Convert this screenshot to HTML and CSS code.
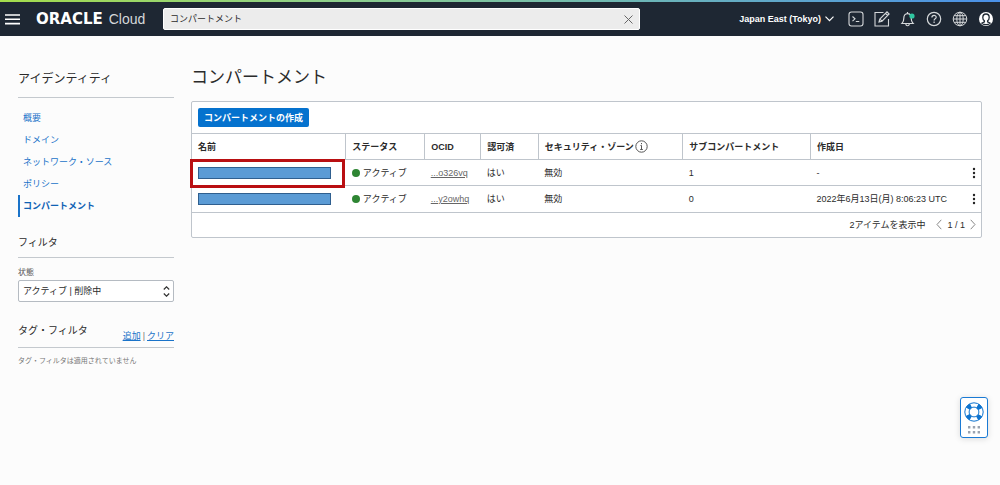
FILE: index.html
```html
<!DOCTYPE html>
<html lang="ja">
<head>
<meta charset="utf-8">
<title>コンパートメント</title>
<link rel="stylesheet" href="styles.css">
</head>
<body>
<header class="topbar">
  <button class="icon-btn menu" aria-label="メニュー"><svg width="15" height="11" viewBox="0 0 15 11" stroke="#fff" stroke-width="1.6"><path d="M0 1h15M0 5.3h15M0 9.600h15"/></svg></button>
  <a class="brand" href="#"><span class="brand-name">ORACLE</span><span class="brand-sub">Cloud</span></a>
  <div class="search">
    <input type="text" value="コンパートメント" aria-label="検索">
    <button class="icon-btn" aria-label="消去"><svg width="9" height="9" viewBox="0 0 9 9" stroke="#666" stroke-width="1"><path d="M.5.5l8 8M8.500.5l-8 8"/></svg></button>
  </div>
  <div class="tools">
    <button class="region">Japan East (Tokyo)<svg width="9" height="6" viewBox="0 0 9 6" fill="none" stroke="#fff" stroke-width="1.2"><path d="M.5.7l4 4 4-4"/></svg></button>
    <button class="icon-btn" aria-label="ターミナル"><svg width="16" height="16" viewBox="0 0 16 16" fill="none" stroke="#d5d8da" stroke-width="1.1"><rect x="1" y="1" width="14" height="14" rx="2.500"/><path d="M4.500 5.500l2.500 2.300-2.500 2.300M7.800 10.500h3.500"/></svg></button>
    <button class="icon-btn" aria-label="編集"><svg width="16" height="16" viewBox="0 0 16 16" fill="none" stroke="#d5d8da" stroke-width="1.1"><path d="M9.500 1.500H1v13.500h13.500V8"/><path d="M5 11l.8-3L13 .9l2.100 2.100L8 10.200zM11.500 2.400l2.100 2.100M5.800 8L8 10.200"/></svg></button>
    <button class="icon-btn" aria-label="お知らせ"><svg width="16" height="16" viewBox="0 0 16 16" fill="none" stroke="#d5d8da" stroke-width="1.200"><path d="M7.500 1v1.500M2 12.500c1.500-1.500 1.800-3 1.800-5.200 0-2.800 1.400-4.700 3.700-4.700s3.700 1.900 3.700 4.700c0 2.200.4 3.700 1.900 5.200zM5.800 13c.3 2.300 3.200 2.300 3.500 0"/><circle cx="12" cy="5" r="2.600" fill="#2fc6a0" stroke="none"/></svg></button>
    <button class="icon-btn" aria-label="ヘルプ"><svg width="16" height="16" viewBox="0 0 16 16" fill="none" stroke="#d5d8da" stroke-width="1.200"><circle cx="8" cy="8" r="6.700"/><path d="M5.900 6.500c0-2.700 4.300-2.700 4.300-.2 0 1.600-2.100 1.500-2.100 3.200M8.100 10.500v1.500"/></svg></button>
    <button class="icon-btn" aria-label="言語"><svg width="16" height="16" viewBox="0 0 16 16" fill="none" stroke="#d5d8da" stroke-width="1"><circle cx="8" cy="8" r="6.800"/><ellipse cx="8" cy="8" rx="3.200" ry="6.800"/><path d="M8 1.200v13.600M1.200 8h13.600M2.200 4.700h11.600M2.200 11.300h11.600"/></svg></button>
    <button class="icon-btn" aria-label="プロファイル"><svg width="16" height="16" viewBox="0 0 16 16"><circle cx="8" cy="8" r="7" fill="#fff"/><path d="M8 3c-2 0-3.200 1.500-3.200 3.400 0 1.500.7 2.800 1.600 3.400v1L4 12.200A6 6 0 0 0 8 13.600a6 6 0 0 0 4-1.400l-2.400-1.400v-1c.9-.6 1.600-1.900 1.600-3.400C11.200 4.500 10 3 8 3z" fill="none" stroke="#1f2933" stroke-width="1.300"/></svg></button>
  </div>
</header>
<div class="page">
  <aside class="sidebar">
    <h2 class="side-title">アイデンティティ</h2>
    <nav class="side-nav">
      <a href="#">概要</a>
      <a href="#">ドメイン</a>
      <a href="#">ネットワーク・ソース</a>
      <a href="#">ポリシー</a>
      <a href="#" class="active" aria-current="page">コンパートメント</a>
    </nav>
    <h3 class="filter-title">フィルタ</h3>
    <label class="field-label" for="state">状態</label>
    <div class="select-box">
      <select id="state"><option>アクティブ | 削除中</option></select>
      <svg width="7" height="11" viewBox="0 0 7 11" fill="none" stroke="#333" stroke-width="1.200"><path d="M.8 3.500l2.700-2.700 2.700 2.700M.8 7.500l2.700 2.700 2.700-2.700"/></svg>
    </div>
    <div class="tag-head">
      <h3>タグ・フィルタ</h3>
      <div class="tag-links"><a href="#">追加</a><span>|</span><a href="#">クリア</a></div>
    </div>
    <p class="note">タグ・フィルタは適用されていません</p>
  </aside>
  <main class="content">
    <h1>コンパートメント</h1>
    <section class="panel">
      <div class="actions"><button class="primary">コンパートメントの作成</button></div>
      <table>
        <colgroup><col class="c-name"><col class="c-status"><col class="c-ocid"><col class="c-auth"><col class="c-zone"><col class="c-sub"><col class="c-date"></colgroup>
        <thead>
          <tr><th>名前</th><th>ステータス</th><th>OCID</th><th>認可済</th><th><span class="with-icon">セキュリティ・ゾーン<svg width="13" height="13" viewBox="0 0 13 13" fill="none" stroke="#555" stroke-width="1"><circle cx="6.500" cy="6.500" r="5.700"/><path d="M6.500 3v1.200M5.500 5.500h1v4M5.200 9.500h2.600"/></svg></span></th><th>サブコンパートメント</th><th>作成日</th></tr>
        </thead>
        <tbody>
          <tr>
            <td class="marked"><span class="mask"></span></td>
            <td><span class="status"><i></i>アクティブ</span></td>
            <td><a class="ocid" href="#">...o326vq</a></td>
            <td>はい</td><td>無効</td><td>1</td>
            <td><div class="date"><span>-</span><button class="icon-btn" aria-label="アクション"><svg width="4" height="12" viewBox="0 0 4 12" fill="#222"><circle cx="2" cy="2" r="1.200"/><circle cx="2" cy="6" r="1.200"/><circle cx="2" cy="10" r="1.200"/></svg></button></div></td>
          </tr>
          <tr>
            <td><span class="mask"></span></td>
            <td><span class="status"><i></i>アクティブ</span></td>
            <td><a class="ocid" href="#">...y2owhq</a></td>
            <td>はい</td><td>無効</td><td>0</td>
            <td><div class="date"><span>2022年6月13日(月) 8:06:23 UTC</span><button class="icon-btn" aria-label="アクション"><svg width="4" height="12" viewBox="0 0 4 12" fill="#222"><circle cx="2" cy="2" r="1.200"/><circle cx="2" cy="6" r="1.200"/><circle cx="2" cy="10" r="1.200"/></svg></button></div></td>
          </tr>
        </tbody>
      </table>
      <div class="pager">
        <span class="count">2アイテムを表示中</span>
        <button class="icon-btn" aria-label="前へ"><svg width="6" height="11" viewBox="0 0 6 11" fill="none" stroke="#888"><path d="M5.300.8L1 5.500l4.300 4.700"/></svg></button>
        <span>1 / 1</span>
        <button class="icon-btn" aria-label="次へ"><svg width="6" height="11" viewBox="0 0 6 11" fill="none" stroke="#888"><path d="M.7.8L5 5.500.7 10.200"/></svg></button>
      </div>
    </section>
  </main>
</div>
<button class="help" aria-label="サポート">
  <svg width="20" height="20" viewBox="0 0 20 20" fill="none"><circle cx="10" cy="10" r="7" stroke="#fff" stroke-width="5"/><circle cx="10" cy="10" r="7" stroke="#0f74cf" stroke-width="4.600" stroke-dasharray="4.400 6.596" stroke-dashoffset="-3.300"/><circle cx="10" cy="10" r="9.200" stroke="#0f74cf"/><circle cx="10" cy="10" r="4.900" stroke="#0f74cf"/></svg>
  <svg width="14" height="8" viewBox="0 0 14 8" fill="#9aa3b0"><path d="M1 0h2.400v2.400H1zM5.800 0h2.400v2.400H5.800zM10.600 0H13v2.400h-2.400zM1 5h2.400v2.400H1zM5.800 5h2.400v2.400H5.800zM10.600 5H13v2.400h-2.400z"/></svg>
</button>
</body>
</html>
```
FILE: styles.css
```css
* { box-sizing: border-box; }
body {
  margin: 0;
  min-height: 100vh;
  background: #fcfcfc;
  color: #2b2b2b;
  font: 9px/14px "Liberation Sans", "Noto Sans CJK JP", sans-serif;
}
button, input, select { font: inherit; color: inherit; }
button { border: 0; padding: 0; background: none; cursor: pointer; }
svg { display: block; flex: none; }
h1, h2, h3, p { margin: 0; font-weight: 400; }
a { color: #1a73c9; }

.topbar {
  display: flex;
  align-items: center;
  height: 36px;
  padding: 2px 6px 0 5px;
  background:
    linear-gradient(90deg, #a4dc4c, #8fd08c 33%, #6fb8b4 62%, #4a90e8) top / 100% 2px no-repeat,
    #1e2733;
}
.icon-btn { display: flex; align-items: center; justify-content: center; }
.brand { display: flex; align-items: baseline; gap: 6px; width: 128px; padding-left: 16px; color: #fff; text-decoration: none; }
.brand-name { font: 700 15px/20px "DejaVu Sans", sans-serif; }
.brand-sub { font-size: 14px; line-height: 20px; color: #d5d8da; }
.search {
  display: flex;
  align-items: center;
  width: 50%;
  max-width: 477px;
  height: 22px;
  margin-left: 15px;
  padding: 0 6px;
  border: 1px solid #fff;
  border-radius: 2px;
  background: #ececec;
}
.search input { flex: 1; min-width: 0; border: 0; padding: 0; background: none; outline: 0; }
.tools { display: flex; align-items: center; gap: 10px; margin-left: auto; }
.region { display: flex; align-items: center; gap: 4px; margin-right: 4px; color: #fff; font-size: 9px; font-weight: 700; }

.page { display: flex; gap: 17px; padding: 30px 18px; }
.sidebar { width: 156px; flex: none; }
.side-title { padding: 3px 0 8px; border-bottom: 1px solid #c4c9ce; font-size: 12px; line-height: 20px; }
.side-nav { display: flex; flex-direction: column; margin: 9px 0 17px; }
.side-nav a { padding-left: 3px; border-left: 2px solid transparent; line-height: 22px; text-decoration: none; }
.side-nav .active { border-color: #1a73c9; font-weight: 700; color: #0f62b4; }
.filter-title { padding-bottom: 5px; border-bottom: 1px solid #c4c9ce; font-size: 10px; line-height: 18px; }
.field-label { display: block; margin-top: 8px; font-size: 8px; color: #555; }
.select-box { display: grid; align-items: center; }
.select-box > * { grid-area: 1 / 1; }
.select-box select { appearance: none; width: 100%; height: 22px; padding: 0 4px; border: 1px solid #b5bbc2; border-radius: 2px; background: #fff; }
.select-box svg { justify-self: end; margin-right: 4px; pointer-events: none; }
.tag-head { display: flex; align-items: flex-end; justify-content: space-between; margin-top: 20px; padding-bottom: 4px; border-bottom: 1px solid #c4c9ce; }
.tag-head h3 { padding-bottom: 3px; font-size: 10px; line-height: 18px; }
.tag-links { display: flex; gap: 2px; color: #777; }
.note { margin-top: 6px; font-size: 7px; color: #777; }

.content { flex: 1; min-width: 0; }
h1 { font-size: 17px; line-height: 24px; margin-bottom: 11px; }
.panel { border: 1px solid #bfc5cc; border-radius: 2px; background: #fff; }
.actions { padding: 6px; }
.primary { display: block; height: 19px; padding: 0 6px; border-radius: 2px; background: #0572ce; color: #fff; font-weight: 700; }
table { width: 100%; table-layout: fixed; border-collapse: collapse; }
.c-name { width: 19.500%; }
.c-status { width: 10%; }
.c-ocid { width: 7.100%; }
.c-auth { width: 7.300%; }
.c-zone { width: 18.300%; }
.c-sub { width: 16.200%; }
th, td { height: 26px; padding: 0 6px; text-align: left; vertical-align: middle; border-top: 1px solid #bfc5cc; white-space: nowrap; }
th + th { border-left: 1px solid #bfc5cc; }
.with-icon { display: flex; align-items: center; gap: 1px; }
.mask { display: block; width: 133px; height: 12px; border: 1px solid #2f5f8f; background: #5b9bd5; }
.marked { position: relative; }
.marked::after { content: ""; position: absolute; inset: -1px 1px -3px -2px; border: 3px solid #b90f12; }
.status { display: flex; align-items: center; gap: 3px; }
.status i { width: 8px; height: 8px; border-radius: 50%; background: #2e8533; }
.ocid { color: #666; }
.date { display: flex; align-items: center; justify-content: space-between; }
.date .icon-btn { margin-right: -1px; }
.pager { display: flex; align-items: center; justify-content: flex-end; gap: 5px; height: 25px; padding-right: 5px; border-top: 1px solid #bfc5cc; }
.count { margin-right: 6px; }

.help {
  position: fixed;
  right: 12px;
  bottom: 47px;
  display: flex;
  flex-direction: column;
  align-items: center;
  justify-content: center;
  gap: 4px;
  width: 28px;
  height: 41px;
  border: 1px solid #1a7ad4;
  border-radius: 3px;
  background: #fff;
  box-shadow: 0 1px 6px #0002;
}
```
